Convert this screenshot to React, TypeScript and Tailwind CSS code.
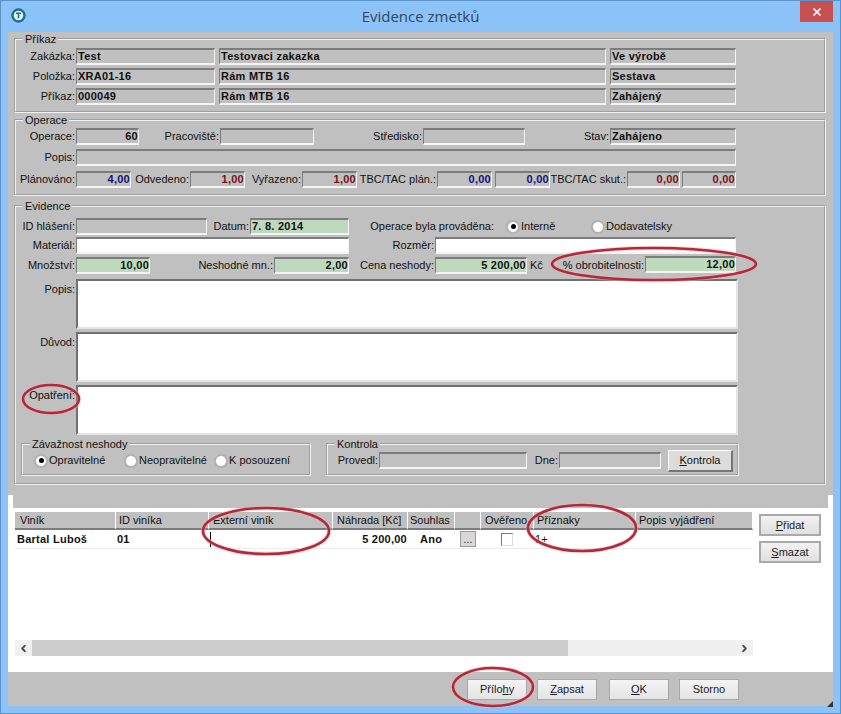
import type { ReactNode } from "react";
import { ChevronLeft, ChevronRight, X } from "lucide-react";

function Label({ className, children }: { className: string; children: ReactNode }) {
  return <span className={`shrink-0 pr-[1px] text-right whitespace-nowrap ${className}`}>{children}</span>;
}

function Field({ className, value, tone = "bg-[#c0c0c0]" }: { className: string; value?: string; tone?: string }) {
  return (
    <div
      className={`h-[17px] shrink-0 overflow-hidden border-t-2 border-l border-r border-b-2 border-t-[#7c7c7c] border-l-[#7c7c7c] border-r-[#f4f4f4] border-b-[#f4f4f4] pl-[1px] leading-[13px] font-bold tracking-[0.25px] whitespace-nowrap ${tone} ${className}`}
    >
      {value}
    </div>
  );
}

function TextBox({ label }: { label: string }) {
  return (
    <div className="flex h-[50px]">
      <Label className="w-[60px] pt-[2px]">{label}</Label>
      <div className="w-[662px] border-t-2 border-l-2 border-r-2 border-b-2 border-t-[#707070] border-l-[#707070] border-r-[#e4e4e4] border-b-[#e4e4e4] bg-white" />
    </div>
  );
}

function Radio({ checked, className = "" }: { checked?: boolean; className?: string }) {
  return (
    <span
      className={`flex h-[12px] w-[12px] shrink-0 items-center justify-center rounded-full border border-[#b4b4b4] bg-white shadow-[0_0_2px_#8a8a8a] ${className}`}
    >
      {checked && <span className="h-[5px] w-[5px] rounded-full bg-black" />}
    </span>
  );
}

function GroupBox({ title, className, children }: { title: string; className: string; children: ReactNode }) {
  return (
    <fieldset className={`border-2 [border-style:groove] border-[#f2f2f2] ${className}`}>
      <legend className="ml-[7px] px-[2px] leading-[12px]">{title}</legend>
      {children}
    </fieldset>
  );
}

function BevelButton({ className, children }: { className: string; children: ReactNode }) {
  return (
    <button className={`flex items-center justify-center border-2 border-[#a9a9a9] bg-gradient-to-b from-[#f2f2f2] to-[#e0e0e0] text-[11px] text-[#1a1a1a] ${className}`}>
      {children}
    </button>
  );
}

function FootButton({ className = "", children }: { className?: string; children: ReactNode }) {
  return (
    <button className={`flex h-[21px] w-[60px] items-center justify-center border border-[#a8a8a8] bg-gradient-to-b from-[#f4f4f4] to-[#e4e4e4] text-[11px] text-[#1a1a1a] ${className}`}>
      {children}
    </button>
  );
}

const columns = [
  { title: "Viník", w: "w-[101px] pl-[5px]" },
  { title: "ID viníka", w: "w-[93px] pl-[3px]" },
  { title: "Externí viník", w: "w-[124px] pl-[4px]" },
  { title: "Náhrada [Kč]", w: "w-[75px] pl-[4px]" },
  { title: "Souhlas", w: "w-[47px] pl-[2px]" },
  { title: "", w: "w-[26px]" },
  { title: "Ověřeno", w: "w-[53px] pl-[4px]" },
  { title: "Příznaky", w: "w-[102px] pl-[3px]" },
  { title: "Popis vyjádření", w: "w-[117px] pl-[3px]" },
];

const green = "bg-[#bfd9bf]";
const blue = "bg-[#c0c0c0] text-right text-[#12127a]";
const red = "bg-[#c0c0c0] text-right text-[#7a1022]";

export default function App() {
  return (
    <div className="relative flex h-[714px] w-[841px] flex-col overflow-hidden border border-[#5b93c8] bg-[#8bc3f8] font-['Liberation_Sans',Arial,sans-serif] text-[11px] text-[#111]">
      {/* title bar */}
      <div className="relative flex h-[31px] shrink-0 items-center justify-center pb-[1px]">
        <svg className="absolute top-[7px] left-[10px]" width="15" height="15" viewBox="0 0 15 15">
          <circle cx="7.5" cy="7.5" r="6" fill="#e8f4f4" stroke="#1c6f86" strokeWidth="2.4" />
          <path d="M5 5.2h5M7.5 5.2v5" stroke="#1c6f86" strokeWidth="1.6" fill="none" />
        </svg>
        <span className="font-['Open_Sans',sans-serif] text-[15px] text-[#33475c]">Evidence zmetků</span>
        <div className="absolute top-0 right-[7px] flex h-[21px] w-[33px] items-center justify-center bg-[#c75050]">
          <X size={12} strokeWidth={3.5} className="text-white" />
        </div>
      </div>

      {/* client area */}
      <div className="mx-[7px] flex h-[674px] flex-col bg-white">
        <div className="h-[463px] shrink-0 bg-[#c0c0c0] px-[6px] pt-[1px]">
          <GroupBox title="Příkaz" className="h-[80px] w-[812px]">
            <div className="flex flex-col gap-[3px] pt-[3px]">
              <div className="flex items-center">
                <Label className="w-[60px]">Zakázka:</Label>
                <Field className="w-[139px]" value="Test" />
                <Field className="ml-[4px] w-[387px]" value="Testovaci zakazka" />
                <Field className="ml-[4px] w-[126px]" value="Ve výrobě" />
              </div>
              <div className="flex items-center">
                <Label className="w-[60px]">Položka:</Label>
                <Field className="w-[139px]" value="XRA01-16" />
                <Field className="ml-[4px] w-[387px]" value="Rám MTB 16" />
                <Field className="ml-[4px] w-[126px]" value="Sestava" />
              </div>
              <div className="flex items-center">
                <Label className="w-[60px]">Příkaz:</Label>
                <Field className="w-[139px]" value="000049" />
                <Field className="ml-[4px] w-[387px]" value="Rám MTB 16" />
                <Field className="ml-[4px] w-[126px]" value="Zahájený" />
              </div>
            </div>
          </GroupBox>

          <GroupBox title="Operace" className="mt-[1px] h-[82px] w-[812px]">
            <div className="flex flex-col pt-[2px]">
              <div className="flex items-center">
                <Label className="w-[60px]">Operace:</Label>
                <Field className="w-[63px] text-right" value="60" />
                <Label className="w-[81px]">Pracoviště:</Label>
                <Field className="w-[94px]" />
                <Label className="w-[109px]">Středisko:</Label>
                <Field className="w-[102px]" />
                <Label className="w-[85px]">Stav:</Label>
                <Field className="w-[126px]" value="Zahájeno" />
              </div>
              <div className="mt-[4px] flex items-center">
                <Label className="w-[60px]">Popis:</Label>
                <Field className="w-[660px]" />
              </div>
              <div className="mt-[5px] flex items-center">
                <Label className="w-[60px]">Plánováno:</Label>
                <Field className="w-[55px]" tone={blue} value="4,00" />
                <Label className="w-[59px]">Odvedeno:</Label>
                <Field className="w-[55px]" tone={red} value="1,00" />
                <Label className="w-[57px]">Vyřazeno:</Label>
                <Field className="w-[55px]" tone={red} value="1,00" />
                <Label className="w-[80px]">TBC/TAC plán.:</Label>
                <Field className="w-[55px]" tone={blue} value="0,00" />
                <Field className="ml-[3px] w-[55px]" tone={blue} value="0,00" />
                <Label className="w-[77px]">TBC/TAC skut.:</Label>
                <Field className="w-[53px]" tone={red} value="0,00" />
                <Field className="ml-[2px] w-[54px]" tone={red} value="0,00" />
              </div>
            </div>
          </GroupBox>

          <GroupBox title="Evidence" className="mt-[4px] h-[285px] w-[812px]">
            <div className="flex flex-col pt-[6px]">
              <div className="flex h-[17px] items-center">
                <Label className="w-[60px]">ID hlášení:</Label>
                <Field className="w-[131px]" />
                <Label className="w-[43px]">Datum:</Label>
                <Field className="w-[99px]" tone={green} value="7. 8. 2014" />
                <Label className="w-[146px] tracking-[0.01px]">Operace byla prováděna:</Label>
                <Radio className="ml-[12px]" checked />
                <span className="ml-[2px] w-[34px]">Interně</span>
                <Radio className="ml-[37px]" />
                <span className="ml-[2px]">Dodavatelsky</span>
              </div>
              <div className="mt-[2px] flex h-[17px] items-center">
                <Label className="w-[60px]">Materiál:</Label>
                <Field className="w-[273px]" tone="bg-white" />
                <Label className="w-[86px]">Rozměr:</Label>
                <Field className="w-[301px]" tone="bg-white" />
              </div>
              <div className="mt-[3px] flex h-[17px] items-center">
                <Label className="w-[60px]">Množství:</Label>
                <Field className="w-[74px] text-right" tone={green} value="10,00" />
                <Label className="w-[124px]">Neshodné mn.:</Label>
                <Field className="w-[75px] text-right" tone={green} value="2,00" />
                <Label className="w-[86px]">Cena neshody:</Label>
                <Field className="w-[92px] text-right" tone={green} value="5 200,00" />
                <span className="ml-[3px] w-[15px]">Kč</span>
                <Label className="w-[100px]">% obrobitelnosti:</Label>
                <Field className="-mt-[3px] w-[91px] text-right" tone={green} value="12,00" />
              </div>
              <div className="mt-[5px] flex flex-col gap-[3px]">
                <TextBox label="Popis:" />
                <TextBox label="Důvod:" />
                <TextBox label="Opatření:" />
              </div>
              <div className="mt-[3px] flex">
                <GroupBox title="Závažnost neshody" className="ml-[5px] h-[38px] w-[290px]">
                  <div className="flex h-[21px] items-center pl-[12px]">
                    <Radio checked />
                    <span className="ml-[2px] w-[76px]">Opravitelné</span>
                    <Radio />
                    <span className="ml-[2px] w-[76px]">Neopravitelné</span>
                    <Radio />
                    <span className="ml-[2px]">K posouzení</span>
                  </div>
                </GroupBox>
                <GroupBox title="Kontrola" className="ml-[15px] h-[38px] w-[413px]">
                  <div className="flex h-[21px] items-center">
                    <Label className="w-[51px] text-left">Provedl:</Label>
                    <Field className="w-[148px]" />
                    <Label className="w-[32px]">Dne:</Label>
                    <Field className="w-[102px]" />
                    <button className="ml-[7px] h-[22px] w-[65px] border-t border-l border-r-2 border-b-2 border-t-white border-l-white border-r-[#777] border-b-[#777] bg-[#dcdcdc] text-[11px]">
                      <u>K</u>ontrola
                    </button>
                  </div>
                </GroupBox>
              </div>
            </div>
          </GroupBox>
        </div>

        <div className="px-[5px]">
          <div className="h-[13px] bg-[#c0c0c0]" />
        </div>

        {/* grid with its buttons */}
        <div className="flex min-h-0 flex-1">
          <div className="ml-[7px] flex w-[738px] flex-col pt-[4px]">
            <div className="flex h-[18px]">
              {columns.map((c) => (
                <div
                  key={c.title}
                  className={`shrink-0 overflow-hidden border-r border-b-2 border-r-white border-b-[#7c7c7c] bg-[#c0c0c0] leading-[16px] whitespace-nowrap ${c.w}`}
                >
                  {c.title}
                </div>
              ))}
            </div>
            <div className="flex h-[19px] items-center border-b border-[#ececec] font-bold tracking-[0.25px]">
              <div className="w-[101px] shrink-0 pl-[2px]">Bartal Luboš</div>
              <div className="w-[93px] shrink-0 pl-[1px]">01</div>
              <div className="flex h-full w-[124px] shrink-0 items-center pl-[1px]">
                <span className="h-[15px] w-[1px] bg-black" />
              </div>
              <div className="w-[75px] shrink-0 pr-[1px] text-right">5 200,00</div>
              <div className="w-[47px] shrink-0 pl-[12px]">Ano</div>
              <div className="flex w-[26px] shrink-0 justify-center">
                <span className="flex h-[16px] w-[16px] items-end justify-center border border-[#9a9a9a] bg-[#d8d8d8] text-[10px] leading-[12px] font-normal">...</span>
              </div>
              <div className="w-[53px] shrink-0 pl-[20px]">
                <span className="block h-[13px] w-[12px] border border-t-[#777] border-l-[#777] border-r-[#ddd] border-b-[#ddd] bg-white" />
              </div>
              <div className="w-[102px] shrink-0 pl-[1px] font-normal">1+</div>
            </div>
            <div className="mt-auto mb-[16px] flex h-[16px] items-center bg-[#f0f0f0]">
              <div className="flex w-[17px] justify-center">
                <ChevronLeft size={11} strokeWidth={4} className="text-[#505050]" />
              </div>
              <div className="h-full w-[536px] bg-[#cdcdcd]" />
              <div className="ml-auto flex w-[17px] justify-center">
                <ChevronRight size={11} strokeWidth={4} className="text-[#505050]" />
              </div>
            </div>
          </div>
          <div className="ml-[6px] flex flex-col gap-[5px] pt-[6px]">
            <BevelButton className="h-[22px] w-[62px]">
              <span><u>P</u>řidat</span>
            </BevelButton>
            <BevelButton className="h-[22px] w-[62px]">
              <span><u>S</u>mazat</span>
            </BevelButton>
          </div>
        </div>

        {/* footer buttons */}
        <div className="flex h-[34px] shrink-0 items-start bg-[#c0c0c0] pt-[7px] pl-[459px]">
          <FootButton>
            <span>Přílo<u>h</u>y</span>
          </FootButton>
          <FootButton className="ml-[10px]">
            <span><u>Z</u>apsat</span>
          </FootButton>
          <FootButton className="ml-[12px]">
            <span><u>O</u>K</span>
          </FootButton>
          <FootButton className="ml-[10px]">Storno</FootButton>
        </div>
      </div>

      {/* resize grip */}
      <svg className="absolute top-[700px] left-[826px]" width="6" height="6" viewBox="0 0 6 6">
        <path d="M6 0V6H0Z" fill="#333" />
      </svg>

      {/* hand-drawn red marks lying over the form */}
      <svg className="pointer-events-none absolute -top-px -left-px" width="841" height="714" viewBox="0 0 841 714" fill="none">
        <g stroke="#efb4b8" strokeWidth="4.5" opacity="0.5">
          <ellipse cx="654" cy="264" rx="102" ry="16" />
          <ellipse cx="51" cy="399" rx="28" ry="14" />
          <ellipse cx="266" cy="531" rx="63" ry="23" />
          <ellipse cx="582" cy="528" rx="54" ry="23" />
          <ellipse cx="493" cy="687" rx="40" ry="19" />
        </g>
        <g stroke="#b02a3c" strokeWidth="2.6">
          <ellipse cx="654" cy="264" rx="102" ry="16" />
          <ellipse cx="51" cy="399" rx="28" ry="14" />
          <ellipse cx="266" cy="531" rx="63" ry="23" />
          <ellipse cx="582" cy="528" rx="54" ry="23" />
          <ellipse cx="493" cy="687" rx="40" ry="19" />
        </g>
      </svg>
    </div>
  );
}
